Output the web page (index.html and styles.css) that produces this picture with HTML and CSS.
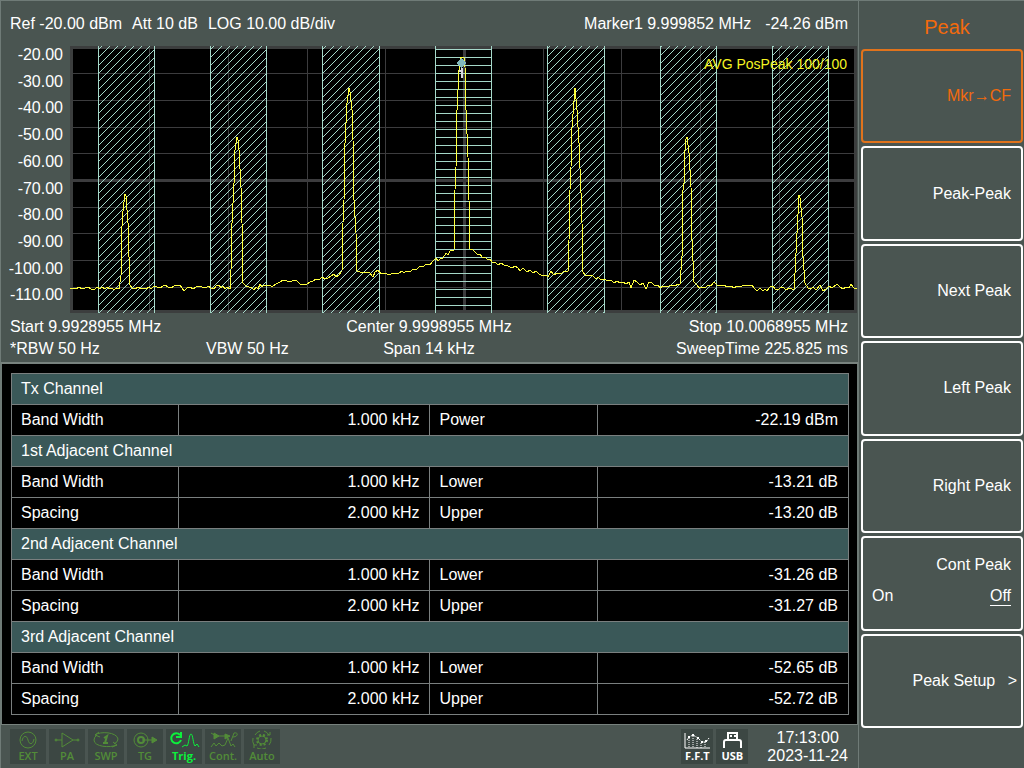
FILE: index.html
```html
<!DOCTYPE html>
<html lang="en">
<head>
    <meta charset="UTF-8">
    <meta name="viewport" content="width=device-width, initial-scale=1.0">
    <title>Spectrum Analyzer</title>
    <link rel="stylesheet" href="styles.css">
</head>
<body>
    <div class="screen">
        <main class="main">
            <section class="trace-panel">
                <div class="trace-header">
                    <span>Ref -20.00 dBm</span>
                    <span>Att 10 dB</span>
                    <span>LOG 10.00 dB/div</span>
                    <span class="marker-freq">Marker1 9.999852 MHz</span>
                    <span class="marker-level">-24.26 dBm</span>
                </div>
                <div class="plot-row">
                    <div class="scale">
                        <span>-20.00</span>
                        <span>-30.00</span>
                        <span>-40.00</span>
                        <span>-50.00</span>
                        <span>-60.00</span>
                        <span>-70.00</span>
                        <span>-80.00</span>
                        <span>-90.00</span>
                        <span>-100.00</span>
                        <span>-110.00</span>
                    </div>
                    <div class="plot">
                        <svg viewBox="0 0 787 267" role="img" aria-label="Spectrum trace">
                            <defs>
                                <pattern id="hatch" width="8" height="8" patternUnits="userSpaceOnUse">
                                    <path class="hatch-line" d="M-1 1L1 -1M-1 9L9 -1M7 9L9 7"/>
                                </pattern>
                            </defs>
                            <rect class="plot-frame" width="787" height="267"/>
                            <rect class="plot-bg" x="3" y="3" width="781" height="261"/>
                            <path class="grid" d="M3 27.5H784M3 54.5H784M3 81.5H784M3 107.5H784M3 161.5H784M3 187.5H784M3 214.5H784M3 241.5H784M79.5 3V264M158.5 3V264M237.5 3V264M315.5 3V264M473.5 3V264M551.5 3V264M630.5 3V264M709.5 3V264"/>
                            <path class="grid-center" d="M3 134.5H784M394.5 3V264"/>
                            <!-- adjacent channels -->
                            <path fill="url(#hatch)" d="M28 0H84V267H28zM140 0H196V267H140zM252 0H309V267H252zM477 0H534V267H477zM590 0H646V267H590zM702 0H758V267H702z"/>
                            <path class="band-edge" d="M28.5 0V267M84.5 0V267M140.5 0V267M196.5 0V267M252.5 0V267M309.5 0V267M477.5 0V267M534.5 0V267M590.5 0V267M646.5 0V267M702.5 0V267M758.5 0V267"/>
                            <!-- tx channel -->
                            <path class="band-edge" d="M365.5 0V267M421.5 0V267M365 3.5H421M365 11.5H421M365 19.5H421M365 27.5H421M365 35.5H421M365 43.5H421M365 51.5H421M365 59.5H421M365 67.5H421M365 75.5H421M365 83.5H421M365 91.5H421M365 99.5H421M365 107.5H421M365 115.5H421M365 123.5H421M365 131.5H421M365 139.5H421M365 147.5H421M365 155.5H421M365 163.5H421M365 171.5H421M365 179.5H421M365 187.5H421M365 195.5H421M365 203.5H421M365 211.5H421M365 219.5H421M365 227.5H421M365 235.5H421M365 243.5H421M365 251.5H421M365 259.5H421"/>
                            <polyline class="trace" points="0,243 3,242 6,243 9,241 12,243 15,242 18,241 21,243 24,244 27,241 30,243 32,241 35,243 37,241 40,243 42,242 44,244 46,242 49,243 51,230 52,180 53,165 55,148 56,150 58,177 59,211 60,239 62,242 65,243 68,241 71,243 73,242 76,243 79,241 81,243 84,240 87,241 90,242 93,240 95,239 98,241 101,242 104,240 106,239 110,239 112,242 114,245 117,242 120,241 123,243 126,241 129,240 132,241 136,242 138,240 141,242 144,243 146,240 149,239 151,242 153,240 155,243 157,241 160,243 161,224 162,177 164,137 165,104 167,91 168,94 169,104 171,141 172,177 173,237 176,240 179,241 182,242 184,244 186,241 188,243 190,238 192,241 194,239 197,240 200,239 202,241 206,238 210,236 213,234 217,235 220,236 224,234 227,235 230,238 233,238 236,239 240,236 243,235 246,233 249,234 252,231 255,233 258,232 261,230 264,228 266,231 269,229 272,225 273,177 274,154 275,97 277,57 279,42 280,46 282,64 283,94 284,154 286,187 287,225 290,226 295,226 300,227 303,231 305,226 308,224 311,228 315,227 319,229 323,227 328,228 332,225 334,227 336,225 340,226 343,223 346,224 350,220 353,221 356,218 360,219 363,215 366,212 368,215 370,213 373,212 376,207 378,209 380,205 384,204 385,144 386,121 387,64 389,24 391,11 394,12 395,21 396,64 398,111 399,154 400,203 403,204 405,206 408,209 410,208 412,211 415,211 417,213 420,213 422,216 425,216 428,219 431,217 434,219 438,220 442,222 445,220 448,222 450,225 453,222 457,226 460,224 463,227 466,225 469,228 473,230 476,229 478,231 481,225 484,229 487,227 491,228 494,225 498,226 499,194 500,144 501,121 502,81 505,42 507,64 509,97 511,147 512,177 513,226 515,229 519,229 523,230 526,233 528,231 531,234 534,233 538,235 541,234 544,237 547,235 550,237 553,236 556,238 559,236 561,242 564,234 567,236 570,239 573,237 576,243 579,236 582,237 585,240 588,239 590,242 593,240 597,241 601,239 605,240 608,238 610,238 612,211 613,144 614,137 615,104 616,93 617,91 619,107 621,141 622,194 624,236 627,239 629,242 632,241 635,242 638,239 641,240 644,236 647,239 650,240 654,239 657,241 661,240 664,242 667,240 670,241 674,239 678,240 682,239 684,242 687,245 690,242 693,245 695,243 697,245 700,241 703,240 705,243 708,244 710,242 713,241 716,244 719,242 722,243 724,243 725,227 727,187 729,149 730,152 732,171 733,211 735,237 738,242 741,243 743,241 746,244 750,239 753,245 756,243 759,240 762,242 767,238 770,241 773,243 776,241 779,242 781,238 784,242 787,243"/>
                            <path class="marker" d="M391 12l5 5l-5 5l-5 -5z"/>
                            <path class="marker-label" d="M389 24H391V22H393V32H391V26H389z"/>
                        </svg>
                        <span class="detector">AVG PosPeak 100/100</span>
                    </div>
                </div>
                <div class="trace-footer">
                    <span>Start 9.9928955 MHz</span>
                    <span class="center">Center 9.9998955 MHz</span>
                    <span class="right">Stop 10.0068955 MHz</span>
                    <span class="bandwidths"><span>*RBW 50 Hz</span><span>VBW 50 Hz</span></span>
                    <span class="center">Span 14 kHz</span>
                    <span class="right">SweepTime 225.825 ms</span>
                </div>
            </section>

            <section class="results">
                <table>
                    <colgroup>
                        <col class="col-label">
                        <col class="col-value">
                        <col class="col-label">
                        <col class="col-value">
                    </colgroup>
                    <tbody>
                        <tr><th colspan="4">Tx Channel</th></tr>
                        <tr><td>Band Width</td><td class="num">1.000 kHz</td><td>Power</td><td class="num">-22.19 dBm</td></tr>
                        <tr><th colspan="4">1st Adjacent Channel</th></tr>
                        <tr><td>Band Width</td><td class="num">1.000 kHz</td><td>Lower</td><td class="num">-13.21 dB</td></tr>
                        <tr><td>Spacing</td><td class="num">2.000 kHz</td><td>Upper</td><td class="num">-13.20 dB</td></tr>
                        <tr><th colspan="4">2nd Adjacent Channel</th></tr>
                        <tr><td>Band Width</td><td class="num">1.000 kHz</td><td>Lower</td><td class="num">-31.26 dB</td></tr>
                        <tr><td>Spacing</td><td class="num">2.000 kHz</td><td>Upper</td><td class="num">-31.27 dB</td></tr>
                        <tr><th colspan="4">3rd Adjacent Channel</th></tr>
                        <tr><td>Band Width</td><td class="num">1.000 kHz</td><td>Lower</td><td class="num">-52.65 dB</td></tr>
                        <tr><td>Spacing</td><td class="num">2.000 kHz</td><td>Upper</td><td class="num">-52.72 dB</td></tr>
                    </tbody>
                </table>
            </section>

            <footer class="status-bar">
                <div class="status">
                    <svg viewBox="0 0 32 20"><circle cx="16" cy="11" r="8"/><path d="M10 12c1-6 5-6 6-1s5 5 6-1"/></svg>
                    EXT
                </div>
                <div class="status">
                    <svg viewBox="0 0 32 20"><path d="M4 11H11M11 4V18L22 11zM22 11H28"/><circle cx="5" cy="11" r="1"/><circle cx="27" cy="11" r="1"/></svg>
                    PA
                </div>
                <div class="status">
                    <svg viewBox="0 0 32 20"><path d="M5 6C10 2 27 3 28 10Q28 13 24 15M27 16C20 19 4 18 4 11Q4 8 7 6M9 3L5 6L10 8M23 13L27 16L22 18"/><path stroke-width="2" d="M14 9L17 7L15 14M13 14H18"/></svg>
                    SWP
                </div>
                <div class="status">
                    <svg viewBox="0 0 32 20"><circle cx="12" cy="11" r="7"/><circle cx="12" cy="11" r="3" stroke-width="2"/><path d="M13 11H27"/><path fill="currentColor" d="M23 8L28 11L23 14z"/></svg>
                    TG
                </div>
                <div class="status active">
                    <svg viewBox="0 0 32 20"><path stroke-width="2" d="M12 6A5 5 0 1 0 13 11M13 3V8H8"/><path d="M14 18L17 16L19 17C21 15 21 5 23 5S25 15 27 17L29 15L31 18"/></svg>
                    Trig.
                </div>
                <div class="status">
                    <svg viewBox="0 0 32 20"><path d="M4 4L9 7H20M4 18L7 14L9 17L12 14L15 17L18 16L21 9L24 17L26 15L28 18M24 12L27 4C32 3 31 8 26 8"/><path fill="currentColor" d="M7 4L12 7L7 10zM18 5L23 7L18 10z"/></svg>
                    Cont.
                </div>
                <div class="status">
                    <svg viewBox="0 0 32 20"><circle cx="16" cy="11" r="4"/><circle cx="16" cy="11" r="5" stroke-width="2" stroke-dasharray="2 2"/><path d="M9 6A9 9 0 0 1 14 2M18 2A9 9 0 0 1 23 6M25 9A9 9 0 0 1 23 16M20 19A9 9 0 0 1 11 19M8 16A9 9 0 0 1 7 9M21 6H24V3M8 19V16H11"/></svg>
                    Auto
                </div>
                <div class="status plain push">
                    <svg viewBox="0 0 32 20"><path d="M4 4V19H29"/><path stroke-dasharray="1 1" d="M8 9V19M12 7V19M16 10V19M20 14V19M24 13V19"/><path stroke-dasharray="2 1" d="M6 11L8 8L12 6L17 9L21 13L25 13L28 9"/><path stroke-width="2" d="M7 8H9M11 6H13M16 9H18M20 13H22M24 12H26"/></svg>
                    F.F.T
                </div>
                <div class="status plain">
                    <svg viewBox="0 0 32 20"><path stroke-width="2" d="M12 10V4H21V10M8 19V13Q8 11 10 11H23Q25 11 25 13V19"/><path d="M14 7H16M18 7H20" stroke-width="2"/></svg>
                    USB
                </div>
                <div class="clock">
                    <div>17:13:00</div>
                    <div>2023-11-24</div>
                </div>
            </footer>
        </main>

        <nav class="menu">
            <h1>Peak</h1>
            <button type="button" class="softkey selected">Mkr→CF</button>
            <button type="button" class="softkey">Peak-Peak</button>
            <button type="button" class="softkey">Next Peak</button>
            <button type="button" class="softkey">Left Peak</button>
            <button type="button" class="softkey">Right Peak</button>
            <button type="button" class="softkey toggle">
                <span>Cont Peak</span>
                <span class="options"><span>On</span><span class="current">Off</span></span>
            </button>
            <button type="button" class="softkey submenu">Peak Setup <span class="arrow">&gt;</span></button>
        </nav>
    </div>
</body>
</html>
```
FILE: styles.css
```css
* {
    box-sizing: border-box;
}
body {
    margin: 0;
    background-color: #4a5551;
    color: #fff;
    font-family: "Liberation Sans", Arial, sans-serif;
    font-size: 16px;
}
.screen {
    display: grid;
    grid-template-columns: 1fr 166px;
    min-height: 100vh;
    border-top: 1px solid #6f7b77;
}
.main {
    display: flex;
    flex-direction: column;
    border-left: 1px solid #6f7b77;
}

/* Trace */
.trace-panel {
    border-bottom: 2px solid #78827e;
}
.trace-header {
    display: flex;
    gap: 10px;
    padding: 0 10px 0 9px;
    line-height: 45px;
}
.marker-freq {
    margin-left: auto;
}
.marker-level {
    margin-left: 4px;
}
.plot-row {
    display: flex;
    padding-right: 1px;
}
.scale {
    display: flex;
    flex-direction: column;
    width: 69px;
    padding-right: 7px;
    text-align: right;
    line-height: 18px;
}
.scale span {
    flex: 1;
}
.plot {
    position: relative;
    flex: 1;
}
.plot svg {
    display: block;
    width: 100%;
    shape-rendering: crispEdges;
}
.plot-frame {
    fill: #3c3e3e;
}
.plot-bg {
    fill: #000;
}
.grid, .grid-center, .trace, .band-edge, .hatch-line {
    fill: none;
    stroke-width: 1;
}
.grid {
    stroke: #3c3c3e;
}
.grid-center {
    stroke: #3c3c3e;
    stroke-width: 3;
}
.band-edge, .hatch-line {
    stroke: #a5d8c9;
}
.trace {
    stroke: #ffff3c;
}
.marker {
    fill: #82b9be;
}
.marker-label {
    fill: #d8d8e0;
}
.detector {
    position: absolute;
    top: 9px;
    right: 10px;
    color: #f4f422;
    font-size: 14px;
    line-height: 18px;
}
.trace-footer {
    display: grid;
    grid-template-columns: 1fr auto 1fr;
    padding: 3px 10px 2px 9px;
    line-height: 22px;
}
.bandwidths {
    display: grid;
    grid-template-columns: 196px auto;
}
.center {
    text-align: center;
}
.right {
    text-align: right;
}

/* Results */
.results {
    flex: 1;
    padding: 9px 8px 9px 9px;
    background-color: #000;
    border-left: 1px solid #6f7b77;
    border-right: 1px solid #6f7b77;
    border-bottom: 1px solid #78827e;
}
table {
    width: 100%;
    border-collapse: collapse;
    table-layout: fixed;
}
.col-label {
    width: 20%;
}
.col-value {
    width: 30%;
}
th, td {
    height: 31px;
    padding: 0 10px 0 9px;
    border: 1px solid #7a7f7f;
    line-height: 18px;
    text-align: left;
    font-weight: normal;
}
th {
    background-color: #3a5858;
}
.num {
    text-align: right;
}

/* Status bar */
.status-bar {
    display: flex;
    gap: 3px;
    padding: 4px 10px 4px 9px;
}
.status {
    display: flex;
    flex-direction: column;
    align-items: center;
    width: 36px;
    height: 35px;
    background-color: #3c4743;
    color: #528c38;
    font-family: "Open Sans", sans-serif;
    font-size: 11px;
    font-weight: 600;
    line-height: 14px;
}
.status svg {
    width: 32px;
    height: 20px;
    fill: none;
    stroke: currentColor;
}
.active {
    color: #0cf03c;
    font-weight: 700;
}
.plain {
    width: 32px;
    color: #fff;
    font-weight: 700;
}
.push {
    margin-left: auto;
}
.clock {
    margin-left: 16px;
    line-height: 18px;
    text-align: center;
}

/* Softkey menu */
.menu {
    display: flex;
    flex-direction: column;
    gap: 3px;
    padding: 0 1px 41px 2px;
    border-left: 1px solid #6f7b77;
}
.menu h1 {
    height: 45px;
    margin: 0;
    padding: 4px 0 0 10px;
    color: #f26a0c;
    font-size: 20px;
    font-weight: normal;
    line-height: 44px;
    text-align: center;
}
.softkey {
    flex: 1 1 0;
    padding: 0 10px 0 9px;
    border: 2px solid #fff;
    border-radius: 4px;
    background: none;
    color: #fff;
    font-family: inherit;
    font-size: 16px;
    text-align: right;
    cursor: pointer;
}
.selected {
    border-color: #e0731c;
    color: #f26a0c;
}
.toggle {
    display: flex;
    flex-direction: column;
    justify-content: center;
    gap: 13px;
    line-height: 18px;
}
.toggle > span {
    width: 100%;
}
.options {
    display: flex;
    justify-content: space-between;
    padding-bottom: 5px;
}
.current {
    border-bottom: 1px solid #fff;
}
.submenu {
    padding-right: 4px;
}
.arrow {
    margin-left: 8px;
}
```
